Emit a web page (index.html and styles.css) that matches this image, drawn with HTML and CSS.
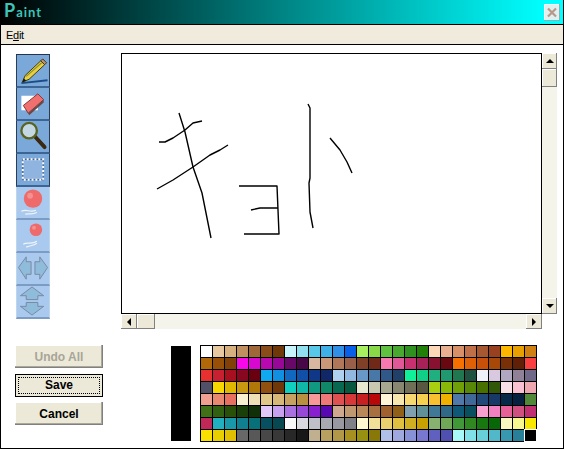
FILE: index.html
```html
<!DOCTYPE html>
<html lang="en">
<head>
<meta charset="utf-8">
<title>Paint</title>
<link rel="stylesheet" href="styles.css">
</head>
<body>
<div class="window">
  <header class="titlebar">
    <span class="title">Paint</span>
    <button class="close" aria-label="Close"><svg viewBox="0 0 16 17" width="16" height="17"><path d="M4 4.500L12 12.500M12 4.500L4 12.500" stroke="#b89888" stroke-width="2.200" fill="none"/></svg></button>
  </header>
  <nav class="menubar"><span class="menu-item">E<u>d</u>it</span></nav>
  <main class="work">
    <div class="toolbar">
      <div class="tool"><svg viewBox="0 0 32 32"><path d="M4 29L31 26" stroke="#1c4c88" stroke-width="2" fill="none"/><path d="M5 28L8 21L24 6L28 10L12 25Z" fill="#e8d040" stroke="#383818" stroke-width="1"/><path d="M9 22L25 8" stroke="#90902a" stroke-width="1.200"/><path d="M24 6L26 4L30 8L28 10Z" fill="#c09070" stroke="#383818"/><path d="M5 28L6.500 24L9 26.500Z" fill="#181810"/></svg></div>
      <div class="tool"><svg viewBox="0 0 32 32"><rect x="4" y="8" width="17" height="15" fill="#fff"/><path d="M6 18L21 6L27 12L11 26Z" fill="#f07070" stroke="#803838"/><path d="M11 26L27 12L27 15L12 28Z" fill="#6a4848"/></svg></div>
      <div class="tool"><svg viewBox="0 0 32 32"><path d="M18 16L28 27" stroke="#3a2810" stroke-width="4" stroke-linecap="round"/><circle cx="12" cy="10" r="8" fill="#c4d8e4" stroke="#5a6420" stroke-width="2.400"/></svg></div>
      <div class="tool"><svg viewBox="0 0 32 32"><rect x="5.500" y="5.500" width="21" height="21" fill="#8fb4e0" stroke="#3a5480" stroke-width="1"/><rect x="5.500" y="5.500" width="21" height="21" fill="none" stroke="#fff" stroke-width="2" stroke-dasharray="2 2"/></svg></div>
      <div class="tool tool-off"><svg viewBox="0 0 32 32"><path d="M4 25C10 22 12 27 19 24M8 28C12 27 16 29 20 26" stroke="#f0f4fa" stroke-width="1.200" fill="none"/><circle cx="16" cy="12" r="9.500" fill="#ef6a6a"/><circle cx="13" cy="9" r="3" fill="#f49090"/></svg></div>
      <div class="tool tool-off"><svg viewBox="0 0 32 32"><path d="M6 25C10 22 14 26 20 22M9 28C13 26 16 27 20 24" stroke="#f0f4fa" stroke-width="1.200" fill="none"/><circle cx="19" cy="10" r="6.500" fill="#ef6a6a"/><circle cx="17" cy="8" r="2" fill="#f49090"/></svg></div>
      <div class="tool tool-off"><svg viewBox="0 0 32 32"><path d="M1 15L9 4V9H14V22H9V27Z" fill="#90bcdc" stroke="#7888a0"/><path d="M31 15L23 4V9H18V22H23V27Z" fill="#90bcdc" stroke="#7888a0"/></svg></div>
      <div class="tool tool-off"><svg viewBox="0 0 32 32"><path d="M15 1L27 10H21V14H9V10H3Z" fill="#90bcdc" stroke="#7888a0"/><path d="M15 30L27 21H21V17H9V21H3Z" fill="#90bcdc" stroke="#7888a0"/></svg></div>
    </div>
    <div class="canvas-area">
      <div class="canvas">
        <svg class="drawing" viewBox="122 54 419 259">
          <polyline points="179,113 185,132 193,167 202,193 211,238"/>
          <polyline points="159,142 165,142 173,138 185,130 193,123 202,121"/>
          <polyline points="157,189 173,180 193,167 210,155 220,150 228,145"/>
          <polyline points="239,186 277,186 279,234 244,234"/>
          <polyline points="251,210 260,208 278,208"/>
          <polyline points="308,104 310,108 310,178 309,183 310,212 313,228"/>
          <polyline points="330,138 340,150 347,162 352,173"/>
        </svg>
      </div>
      <div class="scroll scroll-v">
        <div class="sb-btn sb-v"><span class="tri tri-up"></span></div>
        <div class="thumb thumb-v"></div>
        <div class="track"></div>
        <div class="sb-btn sb-v"><span class="tri tri-down"></span></div>
      </div>
      <div class="scroll scroll-h">
        <div class="sb-btn sb-h"><span class="tri tri-left"></span></div>
        <div class="thumb thumb-h"></div>
        <div class="track"></div>
        <div class="sb-btn sb-h"><span class="tri tri-right"></span></div>
      </div>
    </div>
  </main>
  <section class="bottom">
    <div class="actions">
      <button class="btn" disabled>Undo All</button>
      <button class="btn btn-default"><span>Save</span></button>
      <button class="btn btn-cancel">Cancel</button>
    </div>
    <div class="current-color"></div>
    <div class="palette" id="palette"></div>
  </section>
</div>
<script src="palette.js"></script>
</body>
</html>
```
FILE: styles.css
```css
* { box-sizing: border-box; }
html, body { margin: 0; padding: 0; background: #fff; }
body { width: 564px; height: 449px; overflow: hidden; font-family: "Liberation Sans", Arial, sans-serif; }
.window { width: 564px; height: 449px; border: 1px solid #000; border-top: 0; display: flex; flex-direction: column; background: #fff; }

.titlebar { height: 25px; flex: none; display: flex; align-items: center; justify-content: space-between; padding: 0 3px 1px 3px; background: linear-gradient(90deg, #000 0%, #00ffff 97%); border-bottom: 1px solid #000; }
.title { font-family: "Lato", sans-serif; font-weight: 700; font-size: 13px; letter-spacing: 1px; color: #3cc4b8; line-height: 23px; }
.title::first-letter { font-size: 18px; }
.close { width: 16px; height: 17px; padding: 0; border: 0; background: #dff0f0; box-shadow: inset -1px -1px 0 #90b0b0, inset 1px 1px 0 #fff; display: block; margin-top: 1px; }
.close svg { display: block; }

.menubar { height: 20px; flex: none; background: #f0ebdd; border-bottom: 1px solid #000; display: flex; align-items: center; padding-left: 5px; }
.menu-item { font-size: 11px; color: #000; letter-spacing: -0.3px; }

.work { display: flex; padding: 8px 0 0 15px; flex: none; }
.toolbar { width: 34px; margin-top: 1px; flex: none; display: flex; flex-direction: column; border-top: 1px solid #24344c; }
.tool { width: 34px; height: 33px; background: #7aa8d8; border-left: 1px solid #2c3c58; border-right: 1px solid #2c3c58; border-bottom: 2px solid #3c6494; overflow: hidden; }
.tool svg { display: block; width: 32px; height: 31px; }
.tool-off { background: #a9c9ee; border-left-color: #c0d4ec; border-right-color: #c0d4ec; border-bottom-color: #7c9cc4; }

.canvas-area { margin-left: 71px; display: grid; grid-template-columns: 421px 15px; grid-template-rows: 261px 15px; }
.canvas { border: 1px solid #000; background: #fff; }
.drawing { display: block; width: 100%; height: 100%; }
.drawing polyline { fill: none; stroke: #000; stroke-width: 1.400; stroke-linejoin: round; }

.scroll { display: flex; background: #f5f4ea; }
.scroll-v { flex-direction: column; grid-column: 2; grid-row: 1; }
.scroll-h { grid-column: 1; grid-row: 2; }
.track { flex: 1; }
.sb-btn, .thumb { background: #ece9d8; box-shadow: inset -1px -1px 0 #808080, inset 1px 1px 0 #fff; display: flex; align-items: center; justify-content: center; flex: none; }
.sb-v { height: 16px; }
.sb-h { width: 16px; }
.thumb-v { height: 18px; }
.thumb-h { width: 18px; }
.tri { width: 0; height: 0; border: 4px solid transparent; }
.tri-up { border-top: 0; border-bottom-color: #000; }
.tri-down { border-bottom: 0; border-top-color: #000; }
.tri-left { border-left: 0; border-right-color: #000; }
.tri-right { border-right: 0; border-left-color: #000; }

.bottom { display: flex; align-items: flex-start; padding: 16px 0 0 14px; }
.actions { width: 88px; flex: none; display: flex; flex-direction: column; gap: 6px; }
.btn { width: 88px; height: 23px; padding: 0; border: 0; background: #ece9d8; font: 700 12px "Liberation Sans", Arial, sans-serif; color: #000; box-shadow: inset -1px -1px 0 #808080, inset -2px -2px 0 #aca899, inset 1px 1px 0 #fff; }
.btn:disabled { color: #a8a598; }
.btn-default { border: 1px solid #000; box-shadow: none; padding: 2px; display: flex; }
.btn-default span { flex: 1; border: 1px dotted #000; line-height: 15px; }
.btn-cancel { margin-top: -1px; }
.current-color { width: 20px; height: 95px; margin: 1px 0 0 68px; background: #000; flex: none; }
.palette { margin-left: 9px; display: grid; grid-template-columns: repeat(28, 11px); grid-auto-rows: 11px; gap: 1px; padding: 1px; background: #000; flex: none; }
.swatch { display: block; }
.swatch-picked { outline: 1px solid #fff; background: #000; }
```
FILE: palette.js
```js
var rows = [
"ffffff e8c8a0 d8b080 c09060 a06838 8a4c18 703808 c8f4fc 90e0f0 58c8e8 40b0e8 3090e8 0860e8 a8f060 88d848 60c040 48a830 309020 208008 fcd8b8 e8b090 d89068 c07048 a85830 984020 fcb800 e8a000 d08010",
"b06808 985008 804008 f808e8 d808d0 b808b0 980898 680868 480848 d8b8a0 c89878 b07858 986048 804028 702818 f878b0 e05898 c83070 a82058 881030 680810 f87000 e06008 c85008 a84808 783008 602008 f84040",
"e83030 c82030 a81020 880820 680010 10a8f0 1090e0 1068c0 1050a8 103888 102868 b0d0f0 90b8e0 6898c8 4878a8 305888 204068 10f098 10d088 20b080 209870 207850 205040 f0f0f8 d8c8e0 b0a8c0 908098 706888",
"505068 f8d800 e0b800 c89810 b07808 905010 703808 10d0c0 10b8a8 109880 108868 086850 085840 e8e8d0 c8c8b0 a8a890 888870 707058 585840 a8d010 88b808 70a008 588808 487000 305808 f8e0e8 f8c0d0 f0a8b0",
"f0a090 e88870 e87060 f8f0d0 f0e0b8 e0c888 d8b878 c8a060 b89040 f89898 f07878 e05050 d83838 c82020 b80808 fff4d8 f8e8b0 f8d870 f8d050 f8c030 f0b000 5078a8 406898 204878 183868 082848 082040 508838",
"407018 306010 285008 184008 103008 e0c8f8 c8a0f0 a870e0 9848d8 8820d0 5808b0 d0a890 c09870 b88858 a87040 a06030 906018 80a0b0 609098 407898 306888 105878 085060 f8a0d0 f080c0 e86098 d05080 c03070",
"c02858 20b0c0 1898a8 108090 087078 085060 084850 f8f8f8 d8d8e0 c0c0c8 a8a8b0 9898a0 808088 fff8d0 f0e098 e8d070 e0c040 d0b020 c8a000 88b070 70a858 409838 308820 187810 086808 f8f8c0 f8f890 f8e800",
"f8e000 e8d000 e0c000 686868 585858 484848 383838 282828 181818 c0b090 b8a060 b09848 a89020 989010 887808 b0c0e8 a0a8e0 8890d8 7878d0 6060c0 5050b0 a8f8f8 80e0e8 68d0d8 50b8c8 3898b0 288098 000000"
];
var palette = document.getElementById("palette");
rows.forEach(function (row, r) {
  row.split(" ").forEach(function (hex, c) {
    var cell = document.createElement("span");
    cell.className = "swatch";
    if (r === 7 && c === 27) cell.classList.add("swatch-picked");
    cell.style.backgroundColor = "#" + hex;
    palette.appendChild(cell);
  });
});
```
